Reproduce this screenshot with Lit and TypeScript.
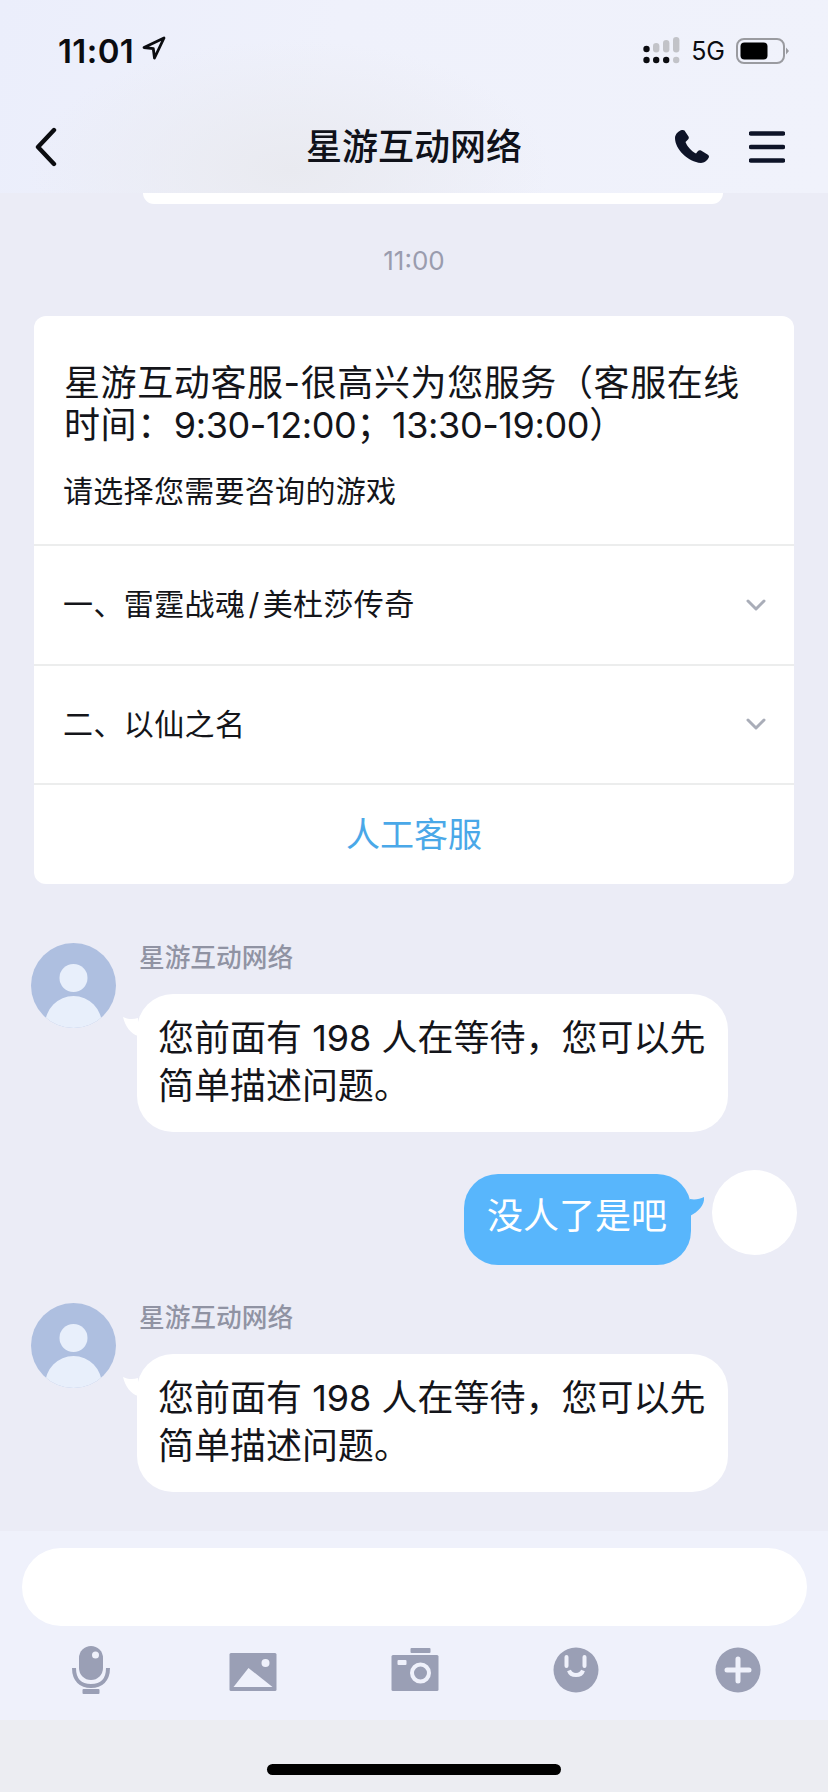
import { LitElement, html, css, svg } from 'lit';
import { customElement } from 'lit/decorators.js';

const chevron = svg`<svg class="chev" width="20" height="12" viewBox="0 0 20 12"><path d="M2 2l8 8 8-8" fill="none" stroke="#a9adb8" stroke-width="3" stroke-linecap="round" stroke-linejoin="round"/></svg>`;

@customElement('app-root')
export class AppRoot extends LitElement {
  static override styles = css`
    :host {
      display: block;
      width: 828px;
      height: 1792px;
      font-family: 'Inter', 'Noto Sans CJK SC', sans-serif;
      color: #14151a;
    }
    .page {
      height: 1792px;
      display: flex;
      flex-direction: column;
      overflow: hidden;
      background: #ebecf6;
    }
    .head {
      height: 193px;
      flex: none;
      background:
        radial-gradient(ellipse 260px 130px at 290px 170px, #e9eaf0 0%, rgba(233, 234, 240, 0) 100%),
        linear-gradient(100deg, #ebeefb 0%, #eff1fb 40%, #f0f2fb 100%);
    }
    .status {
      height: 90px;
      display: flex;
      align-items: center;
      padding: 12px 39px 0 58px;
      box-sizing: border-box;
    }
    .clock {
      font-size: 33px;
      font-weight: 600;
      letter-spacing: 0.4px;
      color: #0b0c10;
    }
    .arrow {
      margin: -6px 0 0 8px;
    }
    .grow {
      flex: 1;
    }
    .net {
      font-size: 25px;
      margin: 0 11px 0 10px;
      color: #0b0c10;
    }
    .nav {
      height: 103px;
      display: grid;
      grid-template-columns: 1fr auto 1fr;
      align-items: center;
      padding: 10px 43px 0 35px;
      box-sizing: border-box;
    }
    .nav-title {
      font-size: 36px;
      font-weight: 500;
      margin: -6px 0 0 8px;
      color: #10121a;
    }
    .nav-right {
      display: flex;
      justify-content: flex-end;
      align-items: center;
      gap: 39px;
    }
    .chat {
      flex: 1;
      min-height: 0;
      display: flex;
      flex-direction: column;
    }
    .prev {
      height: 11px;
      margin: 0 105px 0 143px;
      background: #fff;
      border-radius: 0 0 22px 22px;
      flex: none;
    }
    .time {
      height: 112px;
      line-height: 114px;
      text-align: center;
      font-size: 26px;
      color: #9a9cae;
      flex: none;
    }
    .card {
      margin: 0 34px;
      background: #fff;
      border-radius: 12px;
      flex: none;
    }
    .intro {
      height: 228px;
      padding: 46px 29px 0;
      box-sizing: border-box;
    }
    .intro-main {
      font-size: 36px;
      line-height: 42px;
      white-space: nowrap;
      letter-spacing: 0.6px;
      margin: 0 0 25px 1px;
    }
    .digits {
      letter-spacing: -0.4px;
    }
    .intro-sub {
      font-size: 30px;
      line-height: 40px;
      letter-spacing: 0.3px;
    }
    .row {
      height: 119.5px;
      border-top: 2px solid #eceded;
      box-sizing: border-box;
      display: flex;
      align-items: center;
      justify-content: space-between;
      padding: 0 28px 0 29px;
      font-size: 30px;
      letter-spacing: 0.4px;
    }
    .row span {
      padding-bottom: 5px;
    }
    .row .slash {
      padding: 0 3px;
    }
    .agent {
      height: 101px;
      border-top: 2px solid #eceded;
      box-sizing: border-box;
      text-align: center;
      line-height: 100px;
      font-size: 34px;
      color: #4aa8e8;
    }
    .msg {
      display: flex;
      gap: 21px;
      padding-left: 31px;
      flex: none;
    }
    .first {
      margin-top: 59px;
    }
    .next {
      margin-top: 38px;
    }
    .avatar {
      flex: none;
      display: block;
    }
    .name {
      height: 30px;
      line-height: 30px;
      font-size: 25.7px;
      font-weight: 500;
      color: #9093a3;
      padding-left: 2px;
      margin-bottom: 21px;
    }
    .bubble {
      position: relative;
      background: #fff;
      border-radius: 36px;
      font-size: 36px;
      line-height: 48px;
      white-space: nowrap;
    }
    .bot {
      width: 591px;
      height: 138px;
      box-sizing: border-box;
      padding: 20px 21px;
    }
    .tail {
      position: absolute;
      top: 22px;
      display: block;
    }
    .bot .tail {
      left: -14px;
    }
    .me {
      margin-top: 38px;
      padding: 0 31px 0 0;
      gap: 21px;
      justify-content: flex-end;
    }
    .me .bubble {
      margin-top: 4px;
      background: #58b6fc;
      color: #fff;
      height: 91px;
      line-height: 85px;
      padding: 0 24px 0 23px;
      border-radius: 34px;
    }
    .me .tail {
      right: -14px;
    }
    .me-face {
      width: 85px;
      height: 85px;
      border-radius: 50%;
      background: #fff;
      flex: none;
    }
    .composer {
      height: 189px;
      flex: none;
      background: #eff1fb;
      padding: 17px 21px 0 22px;
      box-sizing: border-box;
    }
    .input {
      height: 78px;
      background: #fff;
      border-radius: 39px;
    }
    .tools {
      display: flex;
      justify-content: space-between;
      padding: 20px 45px 0;
    }
    .tools svg {
      display: block;
    }
    .home {
      height: 72px;
      flex: none;
      background: #ecedf2;
      display: flex;
      justify-content: center;
      padding-top: 44px;
      box-sizing: border-box;
    }
    .bar {
      width: 294px;
      height: 11px;
      border-radius: 6px;
      background: #000;
    }
  `;

  private botMessage(cls: string) {
    return html`
      <div class="msg ${cls}">
        <svg class="avatar" width="85" height="85" viewBox="0 0 85 85">
          <defs><clipPath id="c${cls}"><circle cx="42.5" cy="42.5" r="42.5"/></clipPath></defs>
          <g clip-path="url(#c${cls})">
            <rect width="85" height="85" fill="#aebfe0"/>
            <circle cx="42.5" cy="35" r="14" fill="#e8effb"/>
            <ellipse cx="42.5" cy="82" rx="28.5" ry="29" fill="#e8effb"/>
          </g>
        </svg>
        <div>
          <div class="name">星游互动网络</div>
          <div class="bubble bot">
            <svg class="tail" width="15" height="20" viewBox="0 0 15 20"><path d="M0 1c4 2 9 3 15 1v18C8 18 2 10 0 1z" fill="#fff"/></svg>
            您前面有 198 人在等待，您可以先<br />简单描述问题。
          </div>
        </div>
      </div>
    `;
  }

  override render() {
    return html`
      <div class="page">
        <div class="head">
          <div class="status">
            <span class="clock">11:01</span>
            <svg class="arrow" width="24" height="24" viewBox="0 0 24 24"><path d="M2 11.5L22 2l-9.5 20-1.2-9.3z" fill="none" stroke="#0b0c10" stroke-width="2.8" stroke-linejoin="round"/></svg>
            <span class="grow"></span>
            <svg width="38" height="28" viewBox="0 0 38 28">
              <circle cx="3.5" cy="12" r="3.2" fill="#0b0c10"/>
              <rect x="10" y="6" width="6.4" height="9.5" rx="3.2" fill="#c2c3c8"/>
              <rect x="20" y="3" width="6.4" height="12.5" rx="3.2" fill="#c2c3c8"/>
              <rect x="30" y="0" width="6.4" height="15.5" rx="3.2" fill="#c2c3c8"/>
              <circle cx="3.5" cy="23" r="3.2" fill="#0b0c10"/>
              <circle cx="13.2" cy="23" r="3.2" fill="#0b0c10"/>
              <circle cx="23.2" cy="23" r="3.2" fill="#0b0c10"/>
              <circle cx="33.2" cy="23" r="3.2" fill="#c2c3c8"/>
            </svg>
            <span class="net">5G</span>
            <svg width="53" height="26" viewBox="0 0 53 26">
              <rect x="1" y="1" width="47" height="24" rx="7" fill="none" stroke="#9a9ba0" stroke-width="2"/>
              <rect x="4.5" y="4.5" width="27" height="17" rx="4" fill="#000"/>
              <path d="M50 9.5l3 3.5-3 3.5z" fill="#9a9ba0"/>
            </svg>
          </div>
          <div class="nav">
            <svg width="22" height="40" viewBox="0 0 22 40"><path d="M19 3L3 20l16 17" fill="none" stroke="#0b0c10" stroke-width="4.4" stroke-linecap="round" stroke-linejoin="round"/></svg>
            <div class="nav-title">星游互动网络</div>
            <div class="nav-right">
              <svg width="36" height="35" viewBox="0 0 36 35"><path d="M8 1C5 1.500 1 5 1 9c0 11 13 24 26 25 3 0 7-3 8-6 0-1-.5-2-1.500-2.500L27 21.500c-1-.5-2-.5-3 .5l-2 2.500c-5-2.500-9-7.500-10.500-11.500l2.500-2.500c1-1 1-2 .5-3l-4-6C10 1 9 .8 8 1z" fill="#0e1428"/></svg>
              <svg width="36" height="32" viewBox="0 0 36 32"><path d="M2 2.500h32M2 16h32M2 29.500h32" stroke="#0e1428" stroke-width="4.500" stroke-linecap="round"/></svg>
            </div>
          </div>
        </div>
        <div class="chat">
          <div class="prev"></div>
          <div class="time">11:00</div>
          <div class="card">
            <div class="intro">
              <div class="intro-main">星游互动客服-很高兴为您服务（客服在线<br />时间：<span class="digits">9:30-12:00；13:30-19:00</span>）</div>
              <div class="intro-sub">请选择您需要咨询的游戏</div>
            </div>
            <div class="row"><span>一、雷霆战魂<span class="slash">/</span>美杜莎传奇</span> ${chevron}</div>
            <div class="row"><span>二、以仙之名</span> ${chevron}</div>
            <div class="agent">人工客服</div>
          </div>
          ${this.botMessage('first')}
          <div class="msg me">
            <div class="bubble">
              <svg class="tail" width="15" height="20" viewBox="0 0 15 20"><path d="M0 3c5 1 10 0 14-2 1 8-6 15-14 19z" fill="#58b6fc"/></svg>
              没人了是吧
            </div>
            <div class="me-face"></div>
          </div>
          ${this.botMessage('next')}
        </div>
        <div class="composer">
          <div class="input"></div>
          <div class="tools">
            <svg width="48" height="48" viewBox="0 0 48 48">
              <rect x="12" y="0" width="24" height="34" rx="12" fill="#9a9fb5"/>
              <circle cx="28.500" cy="9" r="3.500" fill="#eff1fb"/>
              <path d="M7 22c0 12 7 18 17 18s17-6 17-18" fill="none" stroke="#9a9fb5" stroke-width="4"/>
              <rect x="15.500" y="43" width="17" height="5" rx="1" fill="#9a9fb5"/>
            </svg>
            <svg width="48" height="48" viewBox="0 0 48 48">
              <rect x="0.500" y="7" width="47" height="38" rx="1.500" fill="#9a9fb5"/>
              <circle cx="36.500" cy="17" r="4" fill="#eff1fb"/>
              <path d="M19.500 22L4.500 41h39z" fill="#eff1fb"/>
            </svg>
            <svg width="48" height="48" viewBox="0 0 48 48">
              <rect x="0.500" y="9" width="47" height="36" rx="1.500" fill="#9a9fb5"/>
              <rect x="19.500" y="2" width="20" height="5" rx="1" fill="#9a9fb5"/>
              <rect x="6.500" y="14" width="9" height="5" rx="1" fill="#eff1fb"/>
              <circle cx="29.500" cy="27" r="8.500" fill="none" stroke="#eff1fb" stroke-width="4"/>
            </svg>
            <svg width="48" height="48" viewBox="0 0 48 48">
              <circle cx="24" cy="24" r="22.500" fill="#9a9fb5"/>
              <path d="M14.500 11v9M32.500 11v9" stroke="#eff1fb" stroke-width="4" stroke-linecap="round"/>
              <path d="M17 24.500c2 6 12 6 14 0" fill="none" stroke="#eff1fb" stroke-width="4"/>
            </svg>
            <svg width="48" height="48" viewBox="0 0 48 48">
              <circle cx="24" cy="24" r="22.500" fill="#9a9fb5"/>
              <path d="M13 24h22M24 13v22" stroke="#eff1fb" stroke-width="5" stroke-linecap="round"/>
            </svg>
          </div>
        </div>
        <div class="home"><div class="bar"></div></div>
      </div>
    `;
  }
}
